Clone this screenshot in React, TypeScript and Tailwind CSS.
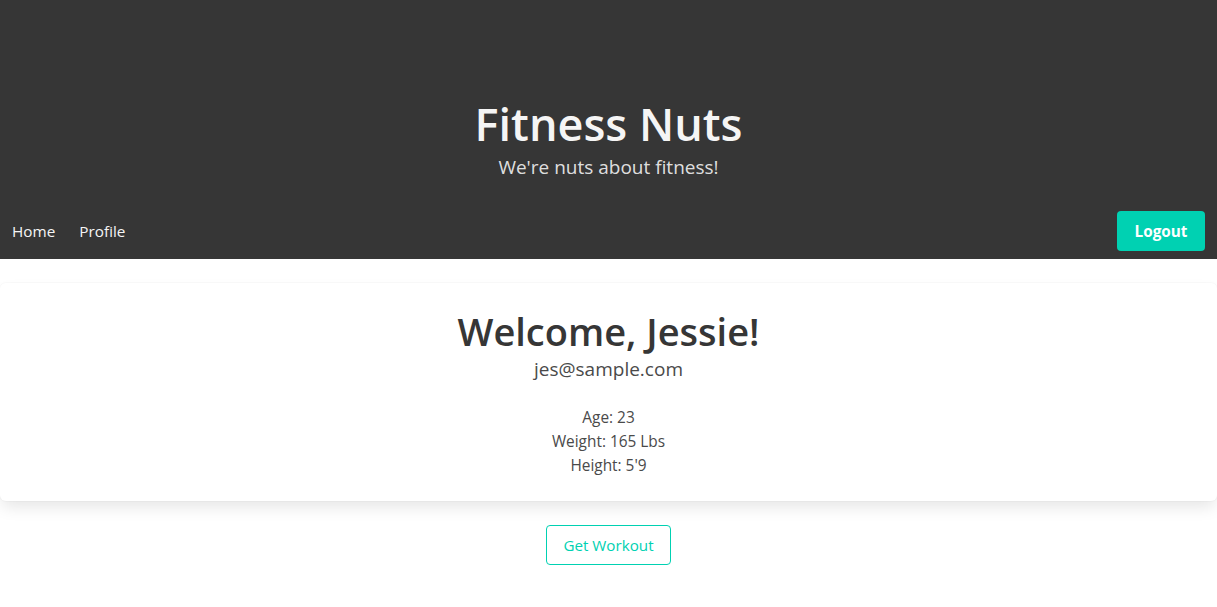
import React from "react";

export default function App() {
  const font = { fontFamily: '"Open Sans", "Noto Sans", sans-serif' };
  return (
    <div className="min-h-screen bg-white" style={font}>
      <header className="bg-[#363636] flex flex-col">
        <div className="flex flex-col items-center pt-[97px] h-[207px]">
          <h1 className="text-[45px] leading-[54px] font-semibold text-[#f5f5f5]">Fitness Nuts</h1>
          <p className="mt-[4px] text-[19px] leading-[25px] text-[rgba(245,245,245,0.9)]">We're nuts about fitness!</p>
        </div>
        <nav className="h-[52px] flex items-center justify-between pb-[4px]">
          <div className="flex items-center">
            <a className="px-3 text-[15.3px] leading-6 text-[#f5f5f5]">Home</a>
            <a className="px-3 text-[15.3px] leading-6 text-[#f5f5f5]">Profile</a>
          </div>
          <button className="mr-3 h-10 w-[88px] rounded-[4px] bg-[#00d1b2] text-white font-bold text-[15.3px]">Logout</button>
        </nav>
      </header>
      <section className="mt-6 rounded-[6px] bg-white shadow-[0_8px_16px_-2px_rgba(10,10,10,0.1),0_0_0_1px_rgba(10,10,10,0.02)] flex flex-col items-center pt-[26px] pb-[23px]">
        <h2 className="text-[38px] leading-[45px] font-semibold text-[#363636]">Welcome, Jessie!</h2>
        <p className="mt-[3px] text-[19px] leading-[25px] text-[#4a4a4a]">jes@sample.com</p>
        <div className="mt-[24px] flex flex-col items-center text-[15.4px] leading-6 text-[#4a4a4a]">
          <span>Age: 23</span>
          <span>Weight: 165 Lbs</span>
          <span>Height: 5'9</span>
        </div>
      </section>
      <div className="flex justify-center mt-[24px]">
        <button className="h-10 w-[125px] rounded-[4px] border border-[#00d1b2] text-[#00d1b2] text-[15.2px] bg-white">Get Workout</button>
      </div>
    </div>
  );
}
